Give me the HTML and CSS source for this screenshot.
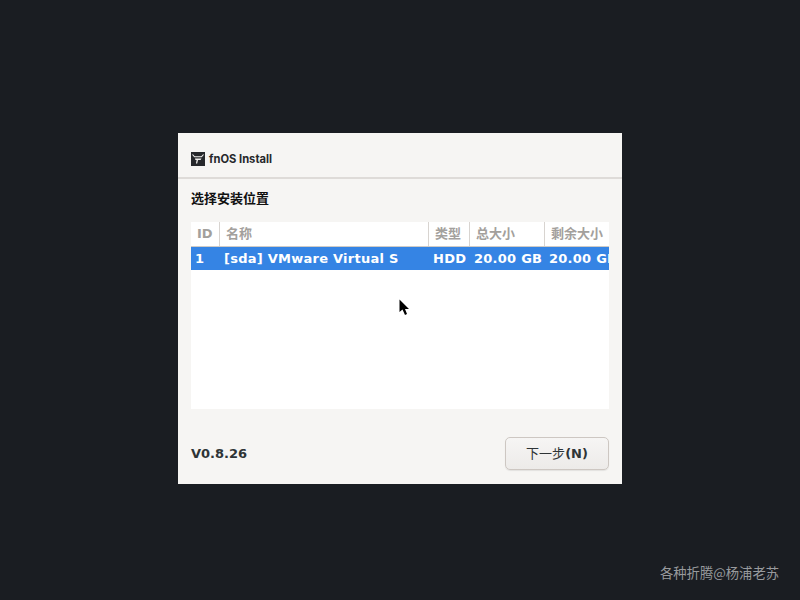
FILE: index.html
```html
<!DOCTYPE html>
<html lang="en">

<head>
    <meta charset="UTF-8">
    <title>fnOS Install</title>
    <link rel="stylesheet" href="styles.css">
</head>

<body>
    <div class="window">
        <div class="titlebar">
            <svg class="logo" width="14" height="14" viewBox="0 0 14 14">
                <rect width="14" height="14" fill="#26282b" />
                <path d="M1.5 2.5 L3.5 4.8 H10.5 L12.5 2.5" fill="none" stroke="#f4f2f0" stroke-width="1.1" />
                <path d="M4 6.5 H10.5 L9.5 8 H7 L6.2 11.5 H5 L5.6 8 H4.4 Z" fill="#f4f2f0" />
            </svg>
            <span>fnOS Install</span>
        </div>
        <div class="content">
            <h3>选择安装位置</h3>
            <div class="table">
                <div class="row head">
                    <div class="c-id">ID</div>
                    <div class="c-name">名称</div>
                    <div class="c-type">类型</div>
                    <div class="c-size">总大小</div>
                    <div class="c-free">剩余大小</div>
                </div>
                <div class="row selected">
                    <div class="c-id">1</div>
                    <div class="c-name">[sda] VMware Virtual S</div>
                    <div class="c-type">HDD</div>
                    <div class="c-size">20.00 GB</div>
                    <div class="c-free">20.00 GB</div>
                </div>
            </div>
            <div class="footer">
                <span class="version">V0.8.26</span>
                <button>下一步<b>(N)</b></button>
            </div>
        </div>
    </div>

    <!-- mouse pointer -->
    <svg class="cursor" width="12" height="18" viewBox="0 0 12 18">
        <path d="M0.5 0.5 V13 L3.5 10.5 L6 16 L8 15 L6 10 H10 Z" fill="#000" />
    </svg>

    <div class="watermark">各种折腾@杨浦老苏</div>
</body>

</html>
```

FILE: styles.css
```css
* {
    padding: 0;
    margin: 0;
    box-sizing: border-box;
}

body {
    width: 800px;
    height: 600px;
    padding-top: 133px;
    overflow: hidden;
    position: relative;
    background-color: #1a1d22;
    font-family: "DejaVu Sans", "Noto Sans CJK SC", sans-serif;
}

.window {
    width: 444px;
    height: 351px;
    margin-left: 178px;
    background-color: #f6f5f3;
}

.titlebar {
    height: 46px;
    padding: 19px 13px 0;
    display: flex;
    align-items: flex-start;
    gap: 4px;
    border-bottom: 2px solid #dedbd8;
    font-family: Inter, "Noto Sans CJK SC", sans-serif;
    font-size: 11.2px;
    font-weight: 700;
    line-height: 14px;
    color: #26282b;
}

.logo {
    flex: none;
}

.content {
    padding: 0 13px;
}

h3 {
    height: 43px;
    padding-top: 10px;
    font-size: 13px;
    line-height: 18px;
    font-weight: 700;
    color: #111;
    font-family: "Noto Sans CJK SC", sans-serif;
}

.table {
    height: 187px;
    background-color: #fff;
    overflow: hidden;
}

.row {
    display: flex;
    white-space: nowrap;
    font-size: 13px;
    font-weight: 700;
}

.row div {
    flex: none;
    overflow: hidden;
}

.c-id {
    width: 29px;
}

.c-name {
    width: 209px;
}

.c-type {
    width: 41px;
}

.c-size {
    width: 75px;
}

.c-free {
    width: 70px;
}

.head {
    height: 25px;
    line-height: 24px;
    color: #a3a09c;
    border-bottom: 1px solid #cfcbc6;
}

.head div {
    padding-left: 6px;
    border-right: 1px solid #d8d4d0;
}

.selected {
    height: 23px;
    line-height: 24px;
    color: #fff;
    background-color: #3584e4;
    letter-spacing: 0.25px;
}

.selected div {
    padding-left: 4px;
}

.footer {
    margin-top: 28px;
    display: flex;
    justify-content: space-between;
    align-items: center;
}

.version {
    font-size: 13px;
    font-weight: 700;
    color: #2e3436;
}

button {
    width: 104px;
    height: 33px;
    padding-bottom: 2px;
    border: 1px solid #cdc7c2;
    border-radius: 5px;
    background: linear-gradient(#f6f5f4, #edebe9);
    box-shadow: 0 1px 1px rgba(0, 0, 0, 0.08);
    color: #2e3436;
    font-family: "DejaVu Sans", "Noto Sans CJK SC", sans-serif;
    font-size: 13px;
}

.cursor {
    position: absolute;
    left: 399px;
    top: 299px;
}

.watermark {
    position: absolute;
    right: 21px;
    bottom: 18px;
    font-family: "Noto Sans CJK SC", sans-serif;
    font-size: 13.3px;
    line-height: 18px;
    color: #989a9d;
}
```
